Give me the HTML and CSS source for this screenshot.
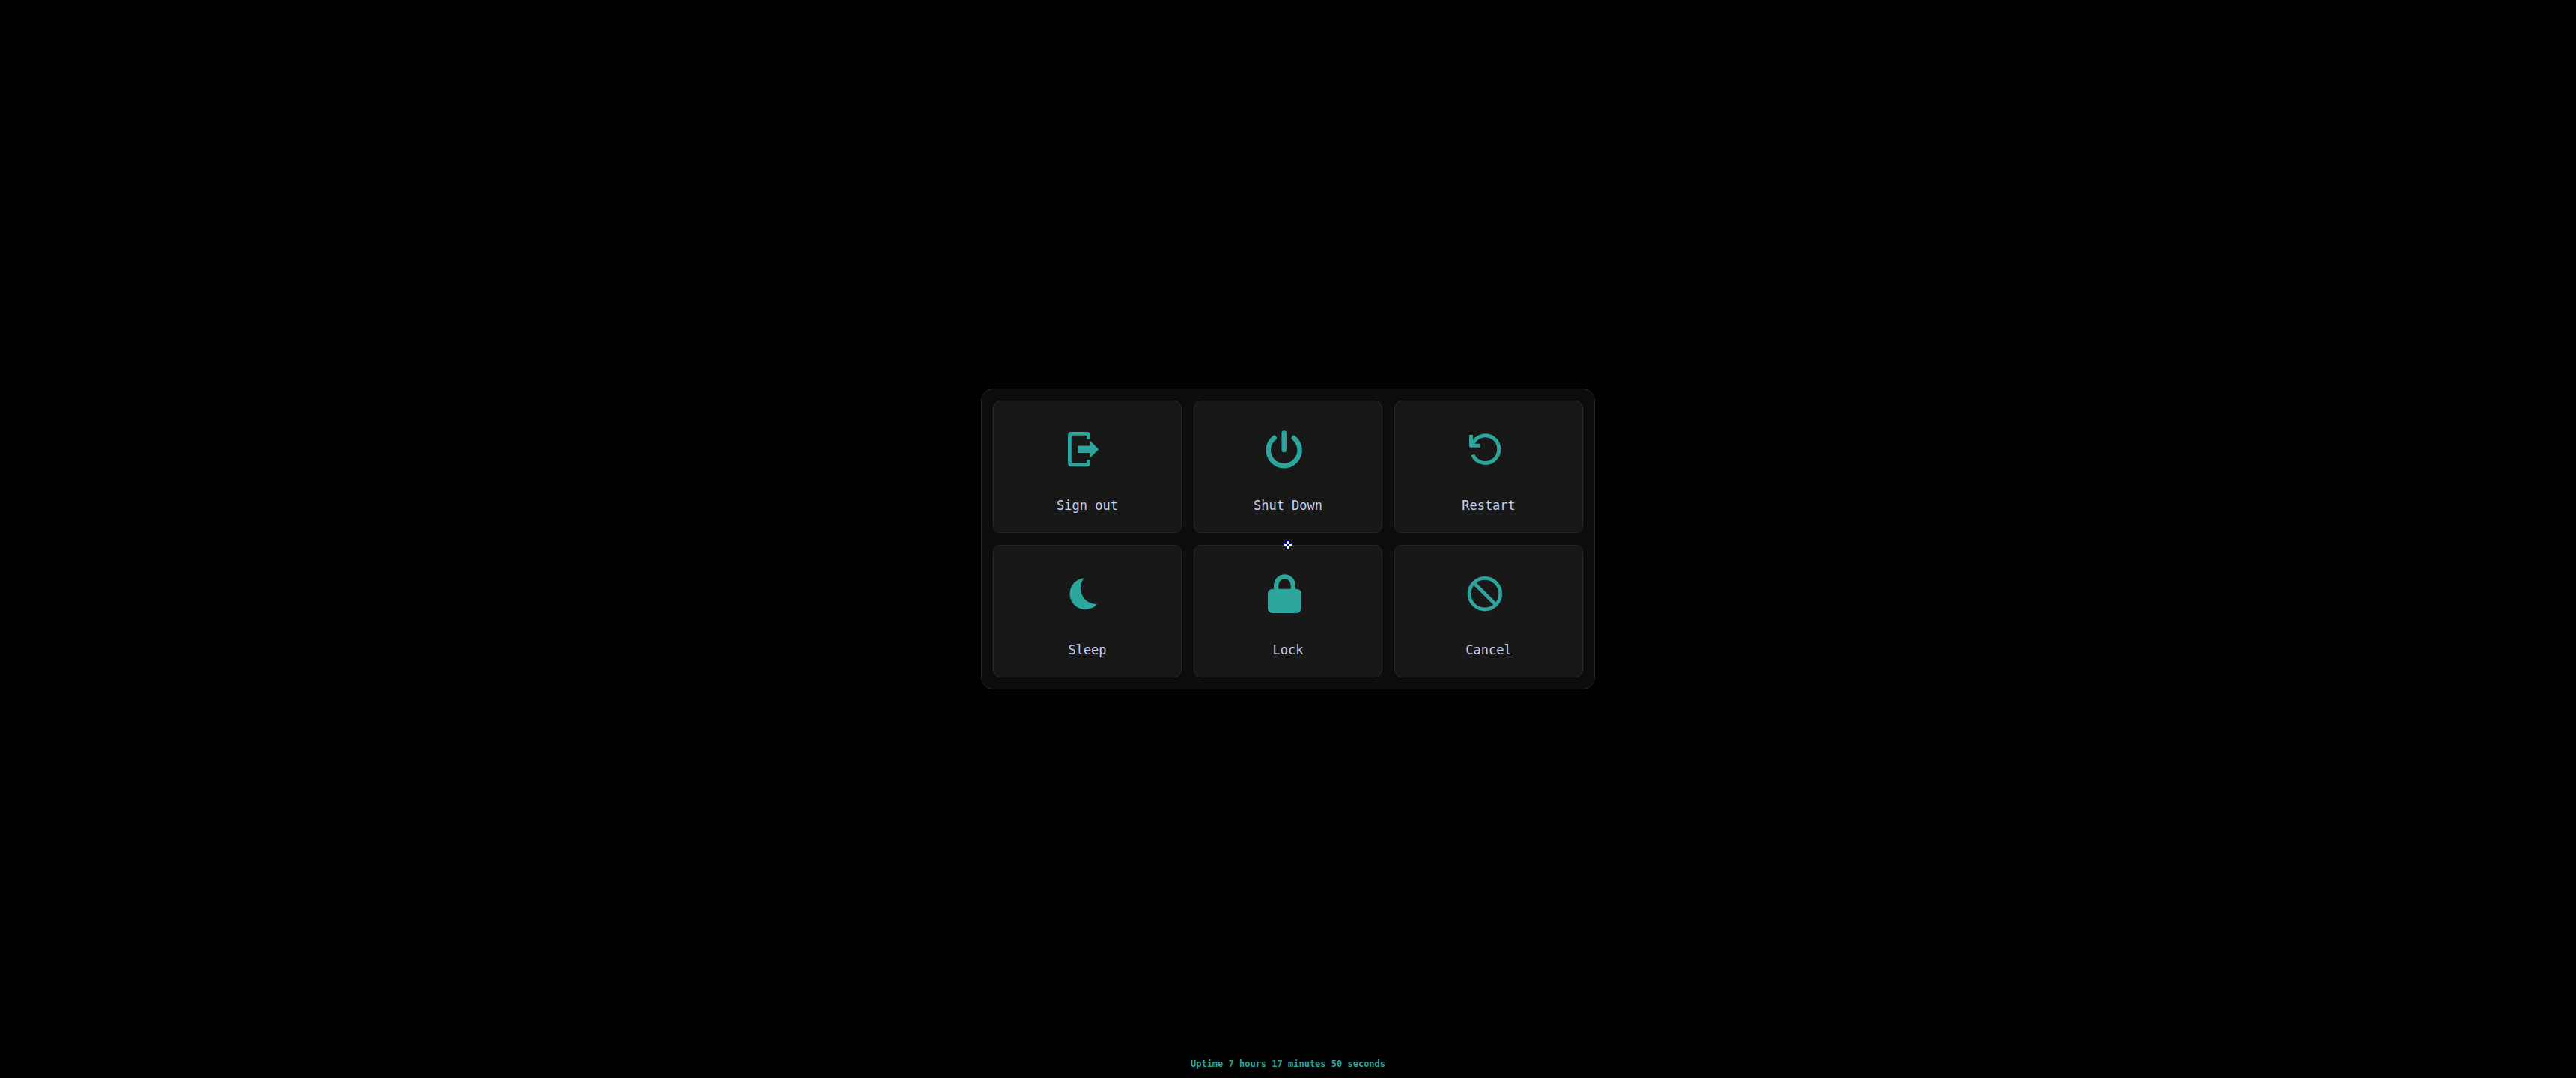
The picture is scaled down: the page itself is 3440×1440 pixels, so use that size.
FILE: index.html
```html
<!DOCTYPE html>
<html lang="en">
<head>
<meta charset="utf-8">
<meta name="viewport" content="width=device-width, initial-scale=1">
<title>Power menu</title>
<link rel="stylesheet" href="styles.css">
</head>
<body>
<main class="panel">
  <button class="action" type="button">
    <svg class="icon" viewBox="0 0 64 64" aria-hidden="true">
      <path class="line" stroke-width="4.8" d="M33.6 18.7V13.4Q33.6 11.4 31.6 11.4H10.4Q8.4 11.4 8.4 13.4V50.8Q8.4 52.8 10.4 52.8H31.6Q33.6 52.8 33.6 50.8V46"/>
      <path class="solid" d="M19.3 27.4H35.7V20.7L47.3 32.2L35.7 43.6V37H19.3Z"/>
    </svg>
    <span class="label">Sign out</span>
  </button>
  <button class="action" type="button">
    <svg class="icon" viewBox="0 0 64 64" aria-hidden="true">
      <path class="line round" stroke-width="6.5" d="M13.6 17A20.9 20.9 0 1 0 39.8 17M26.7 10.6V33"/>
    </svg>
    <span class="label">Shut Down</span>
  </button>
  <button class="action" type="button">
    <svg class="icon" viewBox="0 0 64 64" aria-hidden="true">
      <path class="line" stroke-width="5" d="M10.4 25.6A18.3 18.3 0 1 1 10.7 39.4"/>
      <path class="line" stroke-width="5" stroke-linejoin="round" d="M8.5 13V27.2H20.7"/>
    </svg>
    <span class="label">Restart</span>
  </button>
  <button class="action" type="button">
    <svg class="icon" viewBox="0 0 64 64" aria-hidden="true">
      <path class="solid" d="M27.7 11.2A21 21 0 1 0 45 46.2A21.5 21.5 0 0 1 27.7 11.2Z"/>
    </svg>
    <span class="label">Sleep</span>
  </button>
  <button class="action" type="button">
    <svg class="icon" viewBox="0 0 64 64" aria-hidden="true">
      <rect class="solid" x="5" y="25.7" width="45" height="32.2" rx="6.4"/>
      <path class="line" stroke-width="6.3" d="M16.2 28V20.6A11.3 11.3 0 0 1 38.8 20.6V28"/>
    </svg>
    <span class="label">Lock</span>
  </button>
  <button class="action" type="button">
    <svg class="icon" viewBox="0 0 64 64" aria-hidden="true">
      <circle class="line" stroke-width="4.8" cx="26.9" cy="32.2" r="20.8"/>
      <path class="line" stroke-width="4.8" d="M12.3 17.6L41.5 46.8"/>
    </svg>
    <span class="label">Cancel</span>
  </button>
  <svg class="pointer" viewBox="0 0 12 12" shape-rendering="crispEdges" aria-hidden="true">
    <path fill="#0000c8" d="M4 0H8V4H12V8H8V12H4V8H0V4H4Z"/>
    <path fill="#fff" d="M5 1H7V5H5ZM5 7H7V11H5ZM1 5H5V7H1ZM7 5H11V7H7Z"/>
  </svg>
</main>
<footer class="uptime">Uptime 7 hours 17 minutes 50 seconds</footer>
</body>
</html>
```

FILE: styles.css
```css
* {
  box-sizing: border-box;
}

body {
  margin: 0;
  min-height: 100vh;
  display: grid;
  grid-template-rows: 1fr auto 1fr;
  justify-items: center;
  background: #000;
  font-family: "DejaVu Sans Mono", monospace;
}

.panel {
  position: relative;
  grid-row: 2;
  width: 100%;
  max-width: 820px;
  display: grid;
  grid-template-columns: repeat(3, 1fr);
  gap: 16px;
  padding: 15px;
  border: 1px solid #242424;
  border-radius: 16px;
  background: #0c0c0c;
}

.action {
  display: flex;
  flex-direction: column;
  align-items: center;
  gap: 31px;
  margin: 0;
  padding: 32px 0 24px;
  border: 1px solid #282828;
  border-radius: 10px;
  background: #181818;
  color: #c6cfee;
  font: inherit;
  cursor: pointer;
}

.icon {
  display: block;
  width: 64px;
  height: 64px;
}

.line {
  fill: none;
  stroke: #2ca59d;
}

.round {
  stroke-linecap: round;
}

.solid {
  fill: #2ca59d;
}

.label {
  font-size: 17px;
  line-height: 24px;
}

.pointer {
  position: absolute;
  left: calc(50% - 6px);
  top: calc(50% + 2px);
  width: 12px;
  height: 12px;
  pointer-events: none;
}

.uptime {
  grid-row: 3;
  align-self: end;
  padding-bottom: 11px;
  color: #2ca59d;
  font-size: 12px;
  font-weight: bold;
  line-height: 16px;
}
```
